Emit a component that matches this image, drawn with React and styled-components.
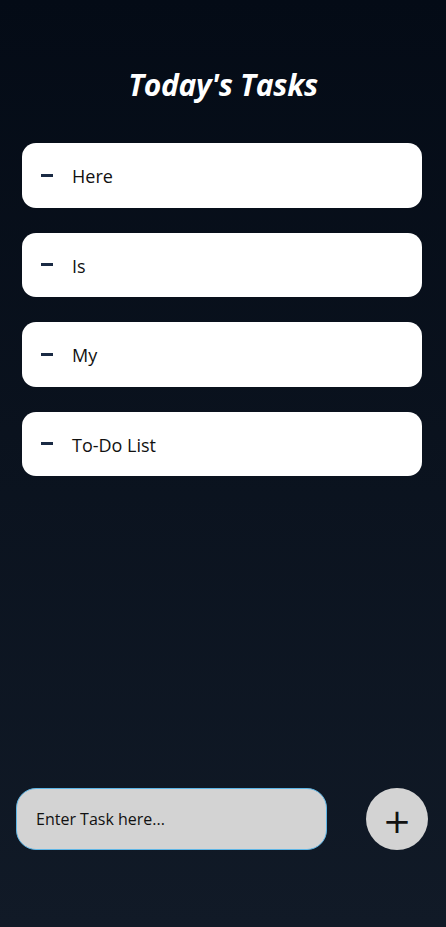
import React from 'react'
import styled, { createGlobalStyle } from 'styled-components'

const tasks = ['Here', 'Is', 'My', 'To-Do List']

const GlobalStyle = createGlobalStyle`
  html, body {
    margin: 0;
    padding: 0;
  }
  body {
    font-family: "Open Sans", "Noto Sans", sans-serif;
    background: #040b16;
  }
`

export default function App () {
  return (
    <>
      <GlobalStyle />
      <Screen>
        <Title>Today's Tasks</Title>
        <List>
          {tasks.map(task => (
            <Card key={task}>
              <Dash />
              <TaskText>{task}</TaskText>
            </Card>
          ))}
        </List>
        <Footer>
          <Input placeholder='Enter Task here...' />
          <AddButton>+</AddButton>
        </Footer>
      </Screen>
    </>
  )
}

const Screen = styled.div`
  height: 927px;
  box-sizing: border-box;
  display: flex;
  flex-direction: column;
  background-image: linear-gradient(to bottom, #040b16 0%, #111a27 100%);
  padding: 64px 0 0;
`

const Title = styled.h1`
  margin: 0;
  text-align: center;
  color: #fff;
  font-size: 30px;
  font-weight: 700;
  font-style: italic;
  line-height: 42px;
  letter-spacing: -0.3px;
`

const List = styled.div`
  display: flex;
  flex-direction: column;
  gap: 25px;
  padding: 37px 24px 0 22px;
  flex: 1;
`

const Card = styled.div`
  height: 64.5px;
  background: #fff;
  border-radius: 14px;
  display: flex;
  align-items: center;
  padding: 0 19px;
`

const Dash = styled.span`
  width: 12px;
  height: 3px;
  background: #1a2a44;
  margin-right: 19px;
`

const TaskText = styled.span`
  font-size: 18px;
  color: #111;
  line-height: 24px;
  padding-top: 2px;
`

const Footer = styled.div`
  display: flex;
  align-items: center;
  justify-content: space-between;
  padding: 0 18px 77px 16px;
`

const Input = styled.input`
  width: 311px;
  height: 62px;
  box-sizing: border-box;
  background: #d3d3d3;
  border: 1px solid #5fb6e6;
  border-radius: 20px;
  padding: 0 19px;
  font-family: "Open Sans", "Noto Sans", sans-serif;
  font-size: 16px;
  outline: none;
  &::placeholder {
    color: #111;
    opacity: 1;
  }
`

const AddButton = styled.div`
  width: 62px;
  height: 62px;
  border-radius: 50%;
  background: #d3d3d3;
  display: flex;
  align-items: center;
  justify-content: center;
  font-family: "DejaVu Sans", sans-serif;
  font-size: 34px;
  font-weight: 400;
  line-height: 1;
  color: #111;
  padding-top: 3px;
  box-sizing: border-box;
`
